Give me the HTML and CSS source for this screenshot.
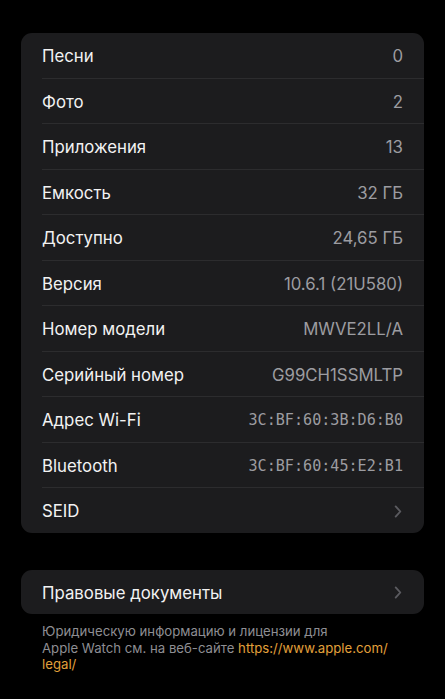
FILE: index.html
```html
<!DOCTYPE html>
<html lang="ru">
<head>
  <meta charset="UTF-8" />
  <title>Об этих часах</title>
  <link rel="stylesheet" href="styles.css">
</head>
<body>
  <div class="group">
    <div class="row"><span class="label">Песни</span><span class="value">0</span></div>
    <div class="row"><span class="label">Фото</span><span class="value">2</span></div>
    <div class="row"><span class="label">Приложения</span><span class="value">13</span></div>
    <div class="row"><span class="label">Емкость</span><span class="value">32 ГБ</span></div>
    <div class="row"><span class="label">Доступно</span><span class="value">24,65 ГБ</span></div>
    <div class="row"><span class="label">Версия</span><span class="value">10.6.1 (21U580)</span></div>
    <div class="row"><span class="label">Номер модели</span><span class="value">MWVE2LL/A</span></div>
    <div class="row"><span class="label">Серийный номер</span><span class="value">G99CH1SSMLTP</span></div>
    <div class="row"><span class="label">Адрес Wi-Fi</span><span class="value mono">3C:BF:60:3B:D6:B0</span></div>
    <div class="row"><span class="label">Bluetooth</span><span class="value mono">3C:BF:60:45:E2:B1</span></div>
    <div class="row"><span class="label">SEID</span>
      <svg class="chevron" viewBox="0 0 8 14" width="8" height="13"><path d="M1.5 1.5 L6.5 7 L1.5 12.5" /></svg>
    </div>
  </div>

  <div class="group legal">
    <div class="row"><span class="label">Правовые документы</span>
      <svg class="chevron" viewBox="0 0 8 14" width="8" height="13"><path d="M1.5 1.5 L6.5 7 L1.5 12.5" /></svg>
    </div>
  </div>
  <p class="note">Юридическую информацию и лицензии для<br>Apple Watch см. на веб-сайте <a href="#">https://www.apple.com/<br>legal/</a></p>
</body>
</html>
```

FILE: styles.css
```css
body {
  margin: 0;
  padding: 33px 21px 0;
  background: #000;
  font-family: Inter, "Noto Sans", sans-serif;
  color: #fff;
}
.group {
  background: #1c1c1e;
  border-radius: 11px;
  padding-left: 21px;
}
.row {
  display: flex;
  justify-content: space-between;
  align-items: center;
  height: 42.5px;
  padding: 2px 21px 0 0;
  font-size: 16.8px;
}
.row + .row {
  border-top: 1px solid #2c2c2e;
}
.label {
  color: #f2f2f2;
}
.value {
  color: #9c9ca1;
}
.mono {
  font-family: "DejaVu Sans Mono", monospace;
  font-size: 15.1px;
}
.chevron {
  fill: none;
  stroke: #5b5b60;
  stroke-width: 2;
  stroke-linecap: round;
  stroke-linejoin: round;
  margin-right: 1px;
}
.legal {
  margin-top: 37px;
}
.note {
  margin: 9px 0 0 21px;
  font-size: 13.2px;
  line-height: 16.5px;
  color: #8e8e93;
}
.note a {
  color: #e3a03b;
  text-decoration: none;
}
```
